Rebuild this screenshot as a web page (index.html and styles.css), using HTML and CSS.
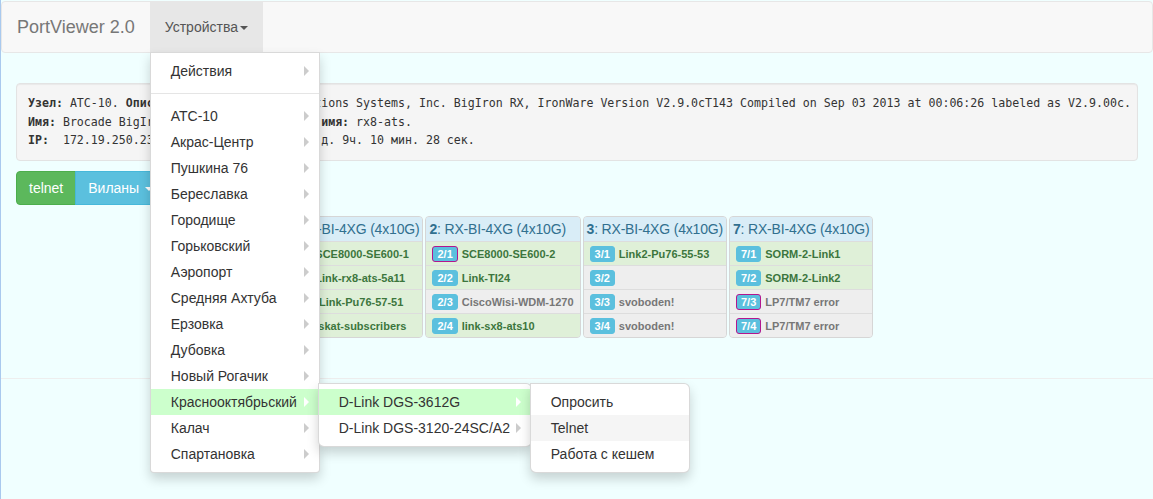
FILE: index.html
```html
<!DOCTYPE html>
<html lang="ru">
<head>
<meta charset="utf-8">
<title>PortViewer 2.0</title>
<link rel="stylesheet" href="styles.css">
</head>
<body>
<nav class="navbar">
  <a class="brand">PortViewer 2.0</a>
  <ul class="nav">
    <li class="dropdown">
      <a class="dropdown-toggle">Устройства<span class="caret"></span></a>
      <ul class="menu main-menu">
        <li class="sub"><a>Действия</a></li>
        <li class="divider"></li>
        <li class="sub"><a>АТС-10</a></li>
        <li class="sub"><a>Акрас-Центр</a></li>
        <li class="sub"><a>Пушкина 76</a></li>
        <li class="sub"><a>Береславка</a></li>
        <li class="sub"><a>Городище</a></li>
        <li class="sub"><a>Горьковский</a></li>
        <li class="sub"><a>Аэропорт</a></li>
        <li class="sub"><a>Средняя Ахтуба</a></li>
        <li class="sub"><a>Ерзовка</a></li>
        <li class="sub"><a>Дубовка</a></li>
        <li class="sub"><a>Новый Рогачик</a></li>
        <li class="sub active"><a>Краснооктябрьский</a>
          <ul class="menu submenu wide">
            <li class="sub active"><a>D-Link DGS-3612G</a>
              <ul class="menu submenu narrow">
                <li><a>Опросить</a></li>
                <li class="hover"><a>Telnet</a></li>
                <li><a>Работа с кешем</a></li>
              </ul>
            </li>
            <li class="sub"><a>D-Link DGS-3120-24SC/A2</a></li>
          </ul>
        </li>
        <li class="sub"><a>Калач</a></li>
        <li class="sub"><a>Спартановка</a></li>
      </ul>
    </li>
  </ul>
</nav>

<div class="container">
<pre class="well"><b>Узел:</b> АТС-10. <b>Описание:</b> Brocade Communications Systems, Inc. BigIron RX, IronWare Version V2.9.0cT143 Compiled on Sep 03 2013 at 00:06:26 labeled as V2.9.00c.
<b>Имя:</b> Brocade BigIron RX-8 node. <b>Системное имя:</b> rx8-ats.
<b>IP:</b>  172.19.250.23. <b>Время работы:</b> 1 г. 12 д. 9ч. 10 мин. 28 сек.</pre>

  <div class="btn-group">
    <a class="btn btn-success">telnet</a>
    <a class="btn btn-info">Виланы <span class="caret"></span></a>
  </div>

  <div class="mods">
    <div class="mod">
      <div class="mod-h"><b>1</b>: RX-BI-4XG (4x10G)</div>
      <div class="port ok"><span class="lbl">1/1</span>SCE8000-SE600-1</div>
      <div class="port ok"><span class="lbl">1/2</span>Link-rx8-ats-5a11</div>
      <div class="port ok"><span class="lbl">1/3</span>-Link-Pu76-57-51</div>
      <div class="port ok"><span class="lbl">1/4</span>Iskat-subscribers</div>
    </div>
    <div class="mod">
      <div class="mod-h"><b>2</b>: RX-BI-4XG (4x10G)</div>
      <div class="port ok"><span class="lbl err">2/1</span>SCE8000-SE600-2</div>
      <div class="port ok"><span class="lbl">2/2</span>Link-TI24</div>
      <div class="port off"><span class="lbl">2/3</span>CiscoWisi-WDM-1270</div>
      <div class="port ok"><span class="lbl">2/4</span>link-sx8-ats10</div>
    </div>
    <div class="mod">
      <div class="mod-h"><b>3</b>: RX-BI-4XG (4x10G)</div>
      <div class="port ok"><span class="lbl">3/1</span>Link2-Pu76-55-53</div>
      <div class="port off"><span class="lbl">3/2</span></div>
      <div class="port off"><span class="lbl">3/3</span>svoboden!</div>
      <div class="port off"><span class="lbl">3/4</span>svoboden!</div>
    </div>
    <div class="mod">
      <div class="mod-h"><b>7</b>: RX-BI-4XG (4x10G)</div>
      <div class="port ok"><span class="lbl">7/1</span>SORM-2-Link1</div>
      <div class="port ok"><span class="lbl">7/2</span>SORM-2-Link2</div>
      <div class="port off"><span class="lbl err">7/3</span>LP7/TM7 error</div>
      <div class="port off"><span class="lbl err">7/4</span>LP7/TM7 error</div>
    </div>
  </div>
</div>
<hr class="sep">
</body>
</html>
```
FILE: styles.css
```css
html {
  background: #f0ffff;
}
body {
  margin: 0;
  min-height: 100vh;
  box-sizing: border-box;
  border-left: 1px solid #a9c9ee;
  background: #f0ffff;
  font-family: "Liberation Sans", Arial, sans-serif;
  font-size: 14px;
  line-height: 1.428571;
  color: #333;
}

/* navbar */
.navbar {
  display: flex;
  margin-top: 1px;
  margin-bottom: 20px;
  height: 52px;
  box-sizing: border-box;
  background: #f8f8f8;
  border: 1px solid #e7e7e7;
  border-radius: 4px;
}
.brand {
  display: block;
  padding: 15px;
  font-size: 18px;
  line-height: 20px;
  color: #777;
}
.nav {
  display: flex;
  list-style: none;
  margin: 0;
  padding: 0;
}
.dropdown {
  position: relative;
}
.dropdown-toggle {
  display: block;
  padding: 15px;
  line-height: 20px;
  color: #555;
  background: #e7e7e7;
}
.caret {
  display: inline-block;
  width: 0;
  height: 0;
  margin-left: 2px;
  vertical-align: middle;
  border-top: 4px solid;
  border-left: 4px solid transparent;
  border-right: 4px solid transparent;
}

/* dropdown menus */
.menu {
  position: absolute;
  top: 100%;
  left: 0;
  z-index: 1000;
  box-sizing: border-box;
  margin: 0;
  padding: 5px 0;
  list-style: none;
  background: #fff;
  border: 1px solid rgba(0, 0, 0, .15);
  border-radius: 0 0 4px 4px;
  box-shadow: 0 6px 12px rgba(0, 0, 0, .175);
}
.main-menu {
  width: 170px;
}
.menu li {
  position: relative;
}
.menu a {
  display: block;
  padding: 3px 20px;
  line-height: 20px;
  color: #333;
  white-space: nowrap;
}
.menu .divider {
  height: 1px;
  margin: 9px 0;
  background: #e5e5e5;
}
.sub > a::after {
  content: "";
  float: right;
  width: 0;
  height: 0;
  margin-top: 5px;
  margin-right: -10px;
  border-style: solid;
  border-width: 5px 0 5px 5px;
  border-color: transparent transparent transparent #ccc;
}
.active > a {
  background: #ccffcc;
}
.active > a::after {
  border-left-color: #fff;
}
.hover > a {
  background: #f5f5f5;
}
.submenu {
  top: 0;
  left: 100%;
  margin-top: -6px;
  margin-left: -1px;
  border-radius: 0 6px 6px 6px;
}
.submenu.wide {
  width: 214px;
}
.submenu.narrow {
  width: 160px;
}

/* content */
.container {
  padding: 10px 15px 20px;
}
.well {
  margin: 0 0 10px;
  padding: 10px 11px;
  background: #f5f5f5;
  border: 1px solid #e3e3e3;
  border-radius: 4px;
  box-shadow: inset 0 1px 1px rgba(0, 0, 0, .05);
  font-family: "DejaVu Sans Mono", "Liberation Mono", monospace;
  font-size: 11.6px;
  line-height: 18.5px;
  white-space: pre;
  overflow: hidden;
  color: #333;
}

.btn-group {
  display: flex;
  margin-bottom: 11px;
}
.btn {
  display: block;
  padding: 6px 12px;
  font-size: 14px;
  line-height: 20px;
  color: #fff;
  border: 1px solid transparent;
}
.btn-success {
  background: #5cb85c;
  border-color: #4cae4c;
  border-radius: 4px 0 0 4px;
}
.btn-info {
  margin-left: -1px;
  background: #5bc0de;
  border-color: #46b8da;
  border-radius: 0 4px 4px 0;
}

/* modules */
.mods {
  display: flex;
  align-items: flex-start;
  gap: 2px;
  margin-left: 263px;
  margin-bottom: 20px;
}
.mod {
  display: flex;
  flex-direction: column;
  border: 1px solid #d6d6d6;
  border-radius: 4px;
  overflow: hidden;
  background: #eee;
}
.mod-h {
  padding: 2px 3px;
  font-size: 14px;
  letter-spacing: -0.18px;
  line-height: 20px;
  color: #31708f;
  background: #d9edf7;
  white-space: nowrap;
}
.port {
  padding: 4px 6px 3px;
  border-top: 1px solid #ddd;
  font-size: 11px;
  font-weight: bold;
  line-height: 16px;
  white-space: nowrap;
}
.port.ok {
  background: #dff0d8;
  color: #3c763d;
}
.port.off {
  background: #eee;
  color: #777;
}
.lbl {
  display: inline-block;
  vertical-align: top;
  margin-right: 4px;
  padding: 0 4px;
  line-height: 14px;
  border: 1px solid #5bc0de;
  border-radius: 3px;
  background: #5bc0de;
  color: #fff;
  font-size: 11px;
  font-weight: bold;
}
.lbl.err {
  border-color: #b3168e;
}

.sep {
  margin: 0;
  border: 0;
  border-top: 1px solid #eee;
}
```
